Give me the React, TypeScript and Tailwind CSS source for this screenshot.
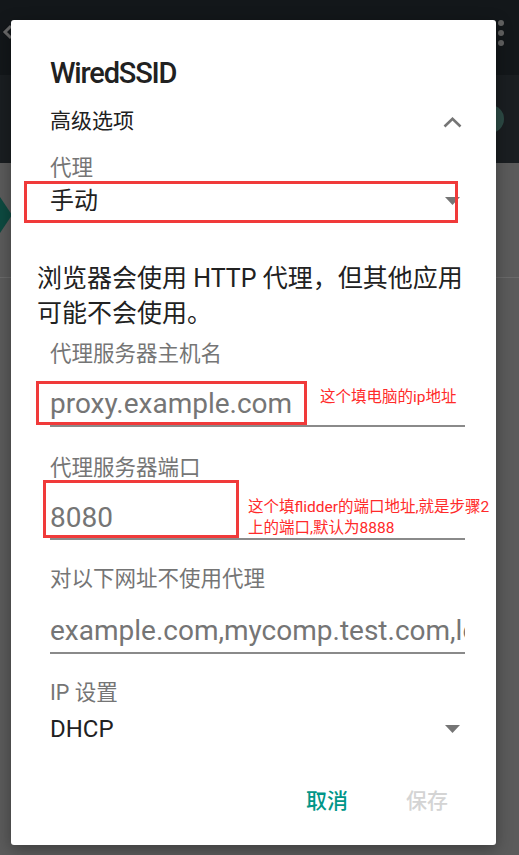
import type { ReactNode } from 'react';

function FieldLabel({ children, className = '' }: { children: ReactNode; className?: string }) {
  return (
    <div className={`text-[21.5px] leading-[26px] text-[#757575] ${className}`}>
      {children}
    </div>
  );
}

function TextInput({ value, className = '' }: { value: string; className?: string }) {
  return (
    <div
      className={`overflow-hidden whitespace-nowrap border-b-2 border-[#8a8a8a] text-[28px] leading-[34px] text-[#757575] ${className}`}
    >
      {value}
    </div>
  );
}

function DropTriangle() {
  return (
    <svg width="15" height="8" viewBox="0 0 15 8" className="mr-[5px]">
      <polygon points="0,0 15,0 7.5,8" fill="#757575" />
    </svg>
  );
}

export default function App() {
  return (
    <div className="relative h-[855px] w-full overflow-hidden bg-[#5b5b5b] font-['Roboto','Noto_Sans_CJK_SC',sans-serif]">
      {/* dimmed settings screen behind the dialog */}
      <div className="flex h-[75px] items-start justify-between bg-[#13171a]">
        <svg width="12" height="16" viewBox="0 0 12 16" className="ml-[2px] mt-[24px]">
          <path d="M9 2 L3 8 L9 14" stroke="#6b6b6b" strokeWidth="3" fill="none" />
        </svg>
        <div className="mr-[15px] mt-[20px] flex flex-col gap-[4px]">
          <span className="h-[6px] w-[6px] rounded-full bg-[#626262]" />
          <span className="h-[6px] w-[6px] rounded-full bg-[#626262]" />
          <span className="h-[6px] w-[6px] rounded-full bg-[#626262]" />
        </div>
      </div>
      <div className="flex h-[88px] justify-end bg-[#1a1e21] pr-[15px] pt-[30px]">
        <span className="h-[28px] w-[28px] rounded-full bg-[#2d4b45]" />
      </div>
      <div className="h-[114px] pt-[30px]">
        <svg width="14" height="40" viewBox="0 0 14 40">
          <polygon points="0,4 12,22 0,40" fill="#0d4a40" />
        </svg>
      </div>
      <div className="h-[1px] bg-[#6a6a6a]" />

      {/* dialog */}
      <div className="absolute left-[11px] top-[20px] h-[825px] w-[485px] rounded-[3px] bg-white pl-[39px] pr-[31px] pt-[35px] shadow-[0_4px_16px_rgba(0,0,0,0.35)]">
        <div className="text-[29px] font-medium leading-[36px] tracking-[-1.2px] text-[#212121]">WiredSSID</div>

        <div className="mt-[13px] flex h-[36px] items-center justify-between text-[21px] text-[#212121]">
          <span>高级选项</span>
          <svg width="19" height="11" viewBox="0 0 19 11" className="mr-[3px]">
            <path d="M1.5 9.5 L9.5 1.8 L17.5 9.5" stroke="#757575" strokeWidth="2.6" fill="none" />
          </svg>
        </div>

        <FieldLabel className="mt-[15px]">代理</FieldLabel>
        <div className="mt-[5px] flex h-[30px] items-center justify-between text-[24px] text-[#212121]">
          <span>手动</span>
          <DropTriangle />
        </div>

        <p className="-ml-[13px] mt-[45px] whitespace-nowrap text-[25px] leading-[35px] text-[#212121]">
          浏览器会使用 HTTP 代理，但其他应用
          <br />
          可能不会使用。
        </p>

        <FieldLabel className="mt-[10px]">代理服务器主机名</FieldLabel>
        <TextInput value="proxy.example.com" className="mt-[20px] pb-[4px]" />

        <FieldLabel className="mt-[28px]">代理服务器端口</FieldLabel>
        <TextInput value="8080" className="mt-[20px] pb-[3px]" />

        <FieldLabel className="mt-[26px]">对以下网址不使用代理</FieldLabel>
        <TextInput value="example.com,mycomp.test.com,localhost" className="mt-[22px] pb-[4px]" />

        <FieldLabel className="mt-[26px]">IP 设置</FieldLabel>
        <div className="mt-[8px] flex h-[30px] items-center justify-between text-[24px] text-[#212121]">
          <span>DHCP</span>
          <DropTriangle />
        </div>

        <div className="mt-[44px] flex h-[28px] items-center justify-end gap-[58px] pr-[17px] text-[21px] font-medium">
          <span className="text-[#009688]">取消</span>
          <span className="text-[#d4d4d4]">保存</span>
        </div>

        {/* red annotations drawn over the screenshot */}
        <div className="absolute left-[13px] top-[161px] h-[42px] w-[434px] border-[3px] border-[#f03a3a]" />
        <div className="absolute left-[25px] top-[361px] h-[44px] w-[271px] border-[3px] border-[#f03a3a]" />
        <div className="absolute left-[32px] top-[460px] h-[58px] w-[196px] border-[3px] border-[#f03a3a]" />
        <div className="absolute left-[309px] top-[367px] whitespace-nowrap text-[15.5px] leading-[21px] text-[#ff2a2a]">
          这个填电脑的ip地址
        </div>
        <div className="absolute left-[237px] top-[477px] whitespace-nowrap text-[15.5px] leading-[21px] text-[#ff2a2a]">
          这个填flidder的端口地址,就是步骤2
          <br />
          上的端口,默认为8888
        </div>
      </div>
    </div>
  );
}
